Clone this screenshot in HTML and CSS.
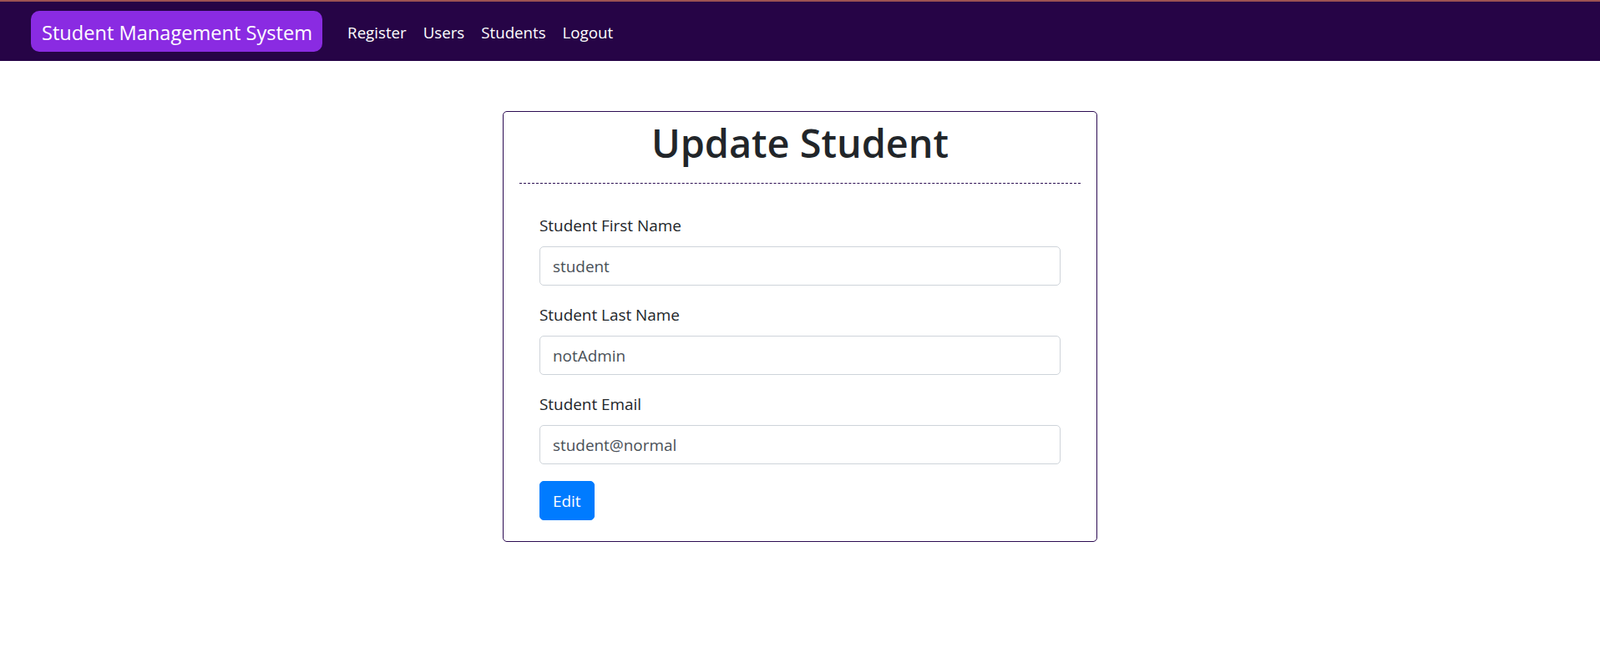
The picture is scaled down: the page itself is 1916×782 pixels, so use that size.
FILE: index.html
```html
<!DOCTYPE html>
<html lang="en">
<head>
<meta charset="utf-8">
<title>Student Management System</title>
<link rel="stylesheet" href="styles.css">
</head>
<body>
<nav class="navbar">
  <a class="brand" href="#">Student Management System</a>
  <ul class="nav">
    <li><a class="nav-link" href="#">Register</a></li>
    <li><a class="nav-link" href="#">Users</a></li>
    <li><a class="nav-link" href="#">Students</a></li>
    <li><a class="nav-link" href="#">Logout</a></li>
  </ul>
</nav>
<main class="page">
  <section class="card">
    <h1 class="title">Update Student</h1>
    <div class="divider"></div>
    <form class="form">
      <div class="group">
        <label class="label" for="fn">Student First Name</label>
        <input class="input" id="fn" type="text" value="student">
      </div>
      <div class="group">
        <label class="label" for="ln">Student Last Name</label>
        <input class="input" id="ln" type="text" value="notAdmin">
      </div>
      <div class="group">
        <label class="label" for="em">Student Email</label>
        <input class="input" id="em" type="text" value="student@normal">
      </div>
      <button class="btn" type="button">Edit</button>
    </form>
  </section>
</main>
</body>
</html>
```

FILE: styles.css
```css
* { box-sizing: border-box; }
html, body { margin: 0; padding: 0; }
body {
  font-family: "Open Sans", "Noto Sans", sans-serif;
  color: #212529;
  background: #fff;
}
.navbar {
  display: flex;
  align-items: center;
  height: 73px;
  border-top: 2px solid #9c5252;
  background: #260446;
  padding: 0 20px 0 37px;
}
.brand {
  display: flex;
  align-items: center;
  height: 49px;
  padding: 2px 12px 0 13px;
  margin-right: 20px;
  background: #8a2be2;
  border-radius: 10px;
  color: #fff;
  text-decoration: none;
  font-size: 23.6px;
  white-space: nowrap;
}
.nav {
  display: flex;
  list-style: none;
  margin: 0;
  padding: 2px 0 0 0;
}
.nav-link {
  display: block;
  padding: 0 10px;
  color: #fff;
  text-decoration: none;
  font-size: 18.7px;
  line-height: 30px;
}
.page { padding-top: 60px; }
.card {
  width: 712px;
  margin: 0 auto;
  border: 1px solid #2b0b52;
  border-radius: 5px;
  padding: 0 19px 25px 19px;
}
.title {
  margin: 0;
  text-align: center;
  font-size: 46.8px;
  font-weight: 600;
  line-height: 60px;
  padding-top: 7px;
  height: 85px;
}
.divider {
  border-top: 1px dashed #2b0b52;
}
.form {
  padding: 35px 24px 0 24px;
}
.group { margin-bottom: 20px; }
.label {
  display: block;
  font-size: 18.9px;
  line-height: 30px;
  margin-bottom: 10px;
}
.input {
  display: block;
  width: 100%;
  height: 47px;
  padding: 0 15px;
  border: 1px solid #ced4da;
  border-radius: 5px;
  font-family: inherit;
  font-size: 18.9px;
  color: #495057;
  background: #fff;
}
.btn {
  display: block;
  height: 47px;
  padding: 0 15px;
  border: 1px solid #007bff;
  border-radius: 5px;
  background: #007bff;
  color: #fff;
  font-family: inherit;
  font-size: 18.9px;
}
```
